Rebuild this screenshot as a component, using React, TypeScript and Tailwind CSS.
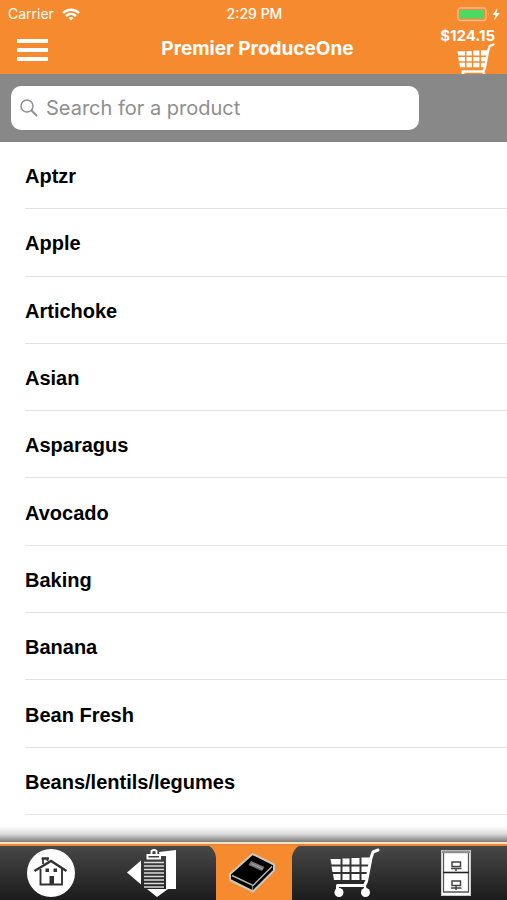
import React from "react";

const products = [
  "Aptzr",
  "Apple",
  "Artichoke",
  "Asian",
  "Asparagus",
  "Avocado",
  "Baking",
  "Banana",
  "Bean Fresh",
  "Beans/lentils/legumes",
];

function WifiIcon() {
  return (
    <svg viewBox="0 0 18 13" className="h-[13px] w-[18px]" fill="none" stroke="#fff" strokeWidth="2.4" aria-hidden="true">
      <path d="M1 5 C5.5 0.6 12.5 0.6 17 5" />
      <path d="M4 8 C7 5.2 11 5.2 14 8" />
      <path d="M6.4 9.900 C8 8.600 10 8.600 11.600 9.900 L9 12.6 Z" fill="#fff" stroke="none" />
    </svg>
  );
}

function BatteryIcon() {
  return (
    <svg viewBox="0 0 44 15" className="h-[15px] w-[44px]" aria-hidden="true">
      <rect x="1" y="1" width="28" height="12.500" rx="2.5" fill="none" stroke="#fbc08c" strokeWidth="1.3" />
      <rect x="3" y="3" width="24" height="8.500" rx="0.8" fill="#4cd964" />
      <path d="M31 5 Q32.8 7 31 9 Z" fill="#fbc08c" />
      <path d="M40.500 1 L35.500 8 H38.600 L37 13.500 L42.800 6 H39.600 Z" fill="#fff" />
    </svg>
  );
}

function CartIcon({ className }: { className: string }) {
  return (
    <svg viewBox="0 0 50 50" className={className} fill="none" aria-hidden="true">
      <path
        d="M0.500 11 H10.500 V16.500 H1.500 Z M12.500 10.500 H19.500 V16.500 H12.500 Z M21.500 10 H29.500 V16.500 H21.500 Z M31.500 9.500 H41.500 L40.500 16.500 H31.500 Z
           M1.500 18.500 H10.500 V24 H2.500 Z M12.500 18.500 H19.500 V24 H12.500 Z M21.500 18.500 H29.500 V24 H21.500 Z M31.500 18.500 H40 L39 24 H31.500 Z
           M3 26 H10.500 V32 H4 Z M12.500 26 H19.500 V32 H12.500 Z M21.500 26 H29.500 V32 H21.500 Z M31.500 26 H38.600 L37.500 32 H31.500 Z"
        fill="#fff"
      />
      <path d="M48 2 L43 4 L41 10 L36.500 33.500 L34.500 37.500 H7.500 V43" stroke="#fff" strokeWidth="3" strokeLinejoin="round" strokeLinecap="round" />
      <path d="M34.500 37 L36 43" stroke="#fff" strokeWidth="2.500" />
      <circle cx="9" cy="44.500" r="4.500" fill="#fff" />
      <circle cx="35.500" cy="44.500" r="4.500" fill="#fff" />
    </svg>
  );
}

function HomeIcon() {
  return (
    <svg viewBox="0 0 48 48" className="h-12 w-12" fill="none" aria-hidden="true">
      <circle cx="24" cy="24" r="24" fill="#fff" />
      <path d="M16 15 V9.500 H20.500 V12" stroke="#333" strokeWidth="1.800" />
      <path d="M14.500 9.500 H22" stroke="#333" strokeWidth="2" />
      <path d="M7.500 22 L24 12 L39.500 22" stroke="#333" strokeWidth="2.400" />
      <path d="M13.500 20 V35.500 H35 V20" stroke="#333" strokeWidth="1.900" />
      <path d="M18.500 19.500 H22 V23 H18.500 Z M26.500 19.500 H30 V23 H26.500 Z M22.500 27 H27 V35 H22.500 Z" fill="#333" />
    </svg>
  );
}

function OrderIcon() {
  return (
    <svg viewBox="0 0 50 48" className="h-12 w-[50px]" fill="none" aria-hidden="true">
      <path d="M0 23.500 L14 11.500 V35.500 Z" fill="#fff" />
      <path d="M32 3 L49 1 V40 H41 L30 48 L20 40 H39 V7 H33 Z" fill="#fff" />
      <path d="M20.500 6 H33 V9.500 H20.500 Z" stroke="#fff" strokeWidth="2" />
      <path d="M24.500 5 V2 Q27 0 29.500 2 V5" stroke="#fff" strokeWidth="1.800" />
      <path
        d="M17 13.500 H37 M17 17 H37 M17 20.500 H37 M17 24 H37 M17 27.500 H37 M17 31 H37 M17 34.500 H37 M17 38 H37"
        stroke="#dcdcdc"
        strokeWidth="1.700"
      />
    </svg>
  );
}

function BookIcon() {
  return (
    <svg viewBox="0 0 48 42" className="h-[42px] w-12" aria-hidden="true">
      <path d="M24.500 2 L46 12.500 V18.500 L25 39.500 L2 28 V22 Z" fill="#000" stroke="#cdc5be" strokeWidth="2" strokeLinejoin="round" />
      <path d="M4 23.500 L25 33.500 L44 14.500" fill="none" stroke="#b5b5b5" strokeWidth="1.400" />
      <path d="M24.500 34 V38" stroke="#888" strokeWidth="1.200" />
      <path d="M23 9 L36.500 15 L34 19 L20.500 13 Z" fill="#777" />
      <path d="M23 11.500 L34.500 16.800" stroke="#aaa" strokeWidth="1" />
    </svg>
  );
}

function CabinetIcon() {
  return (
    <svg viewBox="0 0 30 46" className="h-[46px] w-[30px]" fill="none" aria-hidden="true">
      <rect x="0.500" y="0.500" width="29" height="45" fill="#fff" stroke="#ccc" />
      <path d="M2.500 2 H27.500 V42 H2.500 Z" stroke="#555" strokeWidth="1.300" />
      <path d="M1 2 H29" stroke="#8f8f8f" strokeWidth="2.500" />
      <path d="M2 22.500 H28" stroke="#222" strokeWidth="1.600" />
      <path d="M11 12 H19.500 V16.500 H11 Z M10 18.500 H20.500 M15 18.500 V21 M11 31 H19.500 V35.500 H11 Z M10 38 H20.500 M15 35.500 V40" stroke="#444" strokeWidth="1.500" />
    </svg>
  );
}

function ActiveTabShape() {
  return (
    <svg viewBox="0 0 90 55" preserveAspectRatio="none" className="absolute inset-0 h-full w-[90px]" aria-hidden="true">
      <path d="M0 0 H90 C86 2 83 8 83 12 V55 H7 V12 C7 8 4 2 0 0 Z" fill="#f58b2e" />
    </svg>
  );
}

const tab = "flex h-full flex-1 items-center justify-center";

export default function App() {
  return (
    <div className="flex min-h-screen flex-col bg-white font-['Inter','Liberation_Sans',sans-serif]">
      <header className="h-[74px] overflow-hidden bg-[#f58b2e] text-white">
        <div className="grid h-7 grid-cols-3 items-center pr-1.5 pl-2 text-sm">
          <div className="flex items-center gap-2">
            <span>Carrier</span>
            <WifiIcon />
          </div>
          <span className="text-center font-medium">2:29 PM</span>
          <div className="flex justify-end">
            <BatteryIcon />
          </div>
        </div>
        <div className="grid grid-cols-[78px_1fr_70px] items-start">
          <button type="button" aria-label="Menu" className="ml-[17px] mt-[11px] flex w-[31px] flex-col gap-[5px]">
            <span className="h-1 bg-white" />
            <span className="h-1 bg-white" />
            <span className="h-1 bg-white" />
          </button>
          <h1 className="mt-2 text-center text-[19px] leading-[26px] font-bold">Premier ProduceOne</h1>
          <button type="button" aria-label="Cart, $124.15" className="flex flex-col items-end pr-3 text-[15px] leading-[15px] font-bold">
            <span>$124.15</span>
            <CartIcon className="h-[38px] w-[38px]" />
          </button>
        </div>
      </header>

      <div className="bg-[#888] py-3 pr-[88px] pl-[11px]">
        <label className="flex h-11 items-center gap-2 rounded-[10px] bg-white pl-[9px]">
          <svg viewBox="0 0 18 18" className="h-[18px] w-[18px] shrink-0" fill="none" stroke="#8e8e93" strokeWidth="1.500" aria-hidden="true">
            <circle cx="7" cy="7" r="6" />
            <path d="M11.500 11.500 L17 17" strokeWidth="2" />
          </svg>
          <input
            type="search"
            aria-label="Search for a product"
            placeholder="Search for a product"
            className="min-w-0 flex-1 bg-transparent text-xl text-black outline-none placeholder:text-[#8e8e8e]"
          />
        </label>
      </div>

      <ul className="flex flex-1 flex-col pl-[25px]">
        {products.map((name) => (
          <li key={name} className="flex min-h-[67px] flex-1 border-b border-[#e3e3e5]">
            <button type="button" className="flex-1 pt-[2px] text-left font-['Liberation_Sans',sans-serif] text-xl font-bold text-black">
              {name}
            </button>
          </li>
        ))}
      </ul>

      <div className="mt-[11px] h-4 bg-linear-to-b from-white via-[#dcdcdc] to-[#7c7c7c]" />
      <nav className="flex h-[58px] flex-col">
        <div className="h-[2px] bg-[#fbe3c0]" />
        <div className="h-[2px] bg-[#e8873a]" />
        <div className="flex flex-1 bg-linear-to-b from-[#484848] to-[#1c1c1c]">
          <button type="button" aria-label="Home" className={tab}>
            <HomeIcon />
          </button>
          <button type="button" aria-label="Orders" className={tab}>
            <OrderIcon />
          </button>
          <button type="button" aria-label="Catalog" aria-current="page" className={tab}>
            <span className="relative flex h-full w-[90px] items-center justify-center pr-1">
              <ActiveTabShape />
              <span className="relative">
                <BookIcon />
              </span>
            </span>
          </button>
          <button type="button" aria-label="Cart" className={tab}>
            <CartIcon className="h-[50px] w-[50px]" />
          </button>
          <button type="button" aria-label="Cabinet" className={tab}>
            <CabinetIcon />
          </button>
        </div>
      </nav>
    </div>
  );
}
